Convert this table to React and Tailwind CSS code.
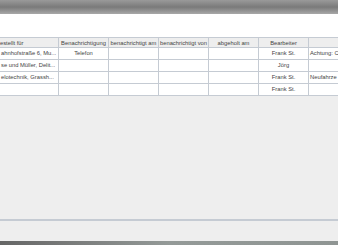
export default function App() {
  const cols = [
    { w: 59, h: "estellt für", align: "left" },
    { w: 50, h: "Benachrichtigung", align: "center" },
    { w: 50, h: "benachrichtigt am", align: "center" },
    { w: 50, h: "benachrichtigt von", align: "center" },
    { w: 50, h: "abgeholt am", align: "center" },
    { w: 50, h: "Bearbeiter", align: "center" },
    { w: 40, h: "", align: "left" },
  ];
  const rows = [
    ["ahnhofstraße 6, Mu...", "Telefon", "", "", "", "Frank St.", "Achtung: C"],
    ["se und Müller, Delit...", "", "", "", "", "Jörg", ""],
    ["elotechnik, Grassh...", "", "", "", "", "Frank St.", "Neufahrze"],
    ["", "", "", "", "", "Frank St.", ""],
  ];
  return (
    <div className="w-[338px] h-[245px] overflow-hidden flex flex-col bg-[#eeeeee] text-[5.8px] text-[#444]" style={{ fontFamily: '"Liberation Sans", Arial, sans-serif' }}>
      <div className="h-[14px] shrink-0 bg-gradient-to-b from-[#9a9a9a] via-[#7a7a7a] to-[#a8a8a8]" />
      <div className="h-[23px] shrink-0 bg-white" />
      <div className="flex flex-col bg-white">
        <div className="flex h-[11px] bg-[#eeeeee] border-t border-b border-[#c5cbd3]">
          {cols.map((c, i) => (
            <div key={i} style={{ width: c.w }} className={`shrink-0 border-r border-[#c5cbd3] leading-[10px] whitespace-nowrap overflow-hidden ${c.align === "center" ? "text-center" : "text-left"}`}>{c.h}</div>
          ))}
        </div>
        {rows.map((r, ri) => (
          <div key={ri} className="flex h-[12px] border-b border-[#c5cbd3]">
            {r.map((v, i) => (
              <div key={i} style={{ width: cols[i].w }} className={`shrink-0 border-r border-[#c5cbd3] leading-[11px] whitespace-nowrap overflow-hidden ${cols[i].align === "center" ? "text-center" : "text-left pl-[1px]"}`}>{v}</div>
            ))}
          </div>
        ))}
      </div>
      <div className="flex-1" />
      <div className="h-[2px] shrink-0 bg-[#c5cbd3]" />
      <div className="h-[20px] shrink-0" />
      <div className="h-[4px] shrink-0 bg-gradient-to-r from-[#666] via-[#949a98] to-[#8f9593]" />
    </div>
  );
}
